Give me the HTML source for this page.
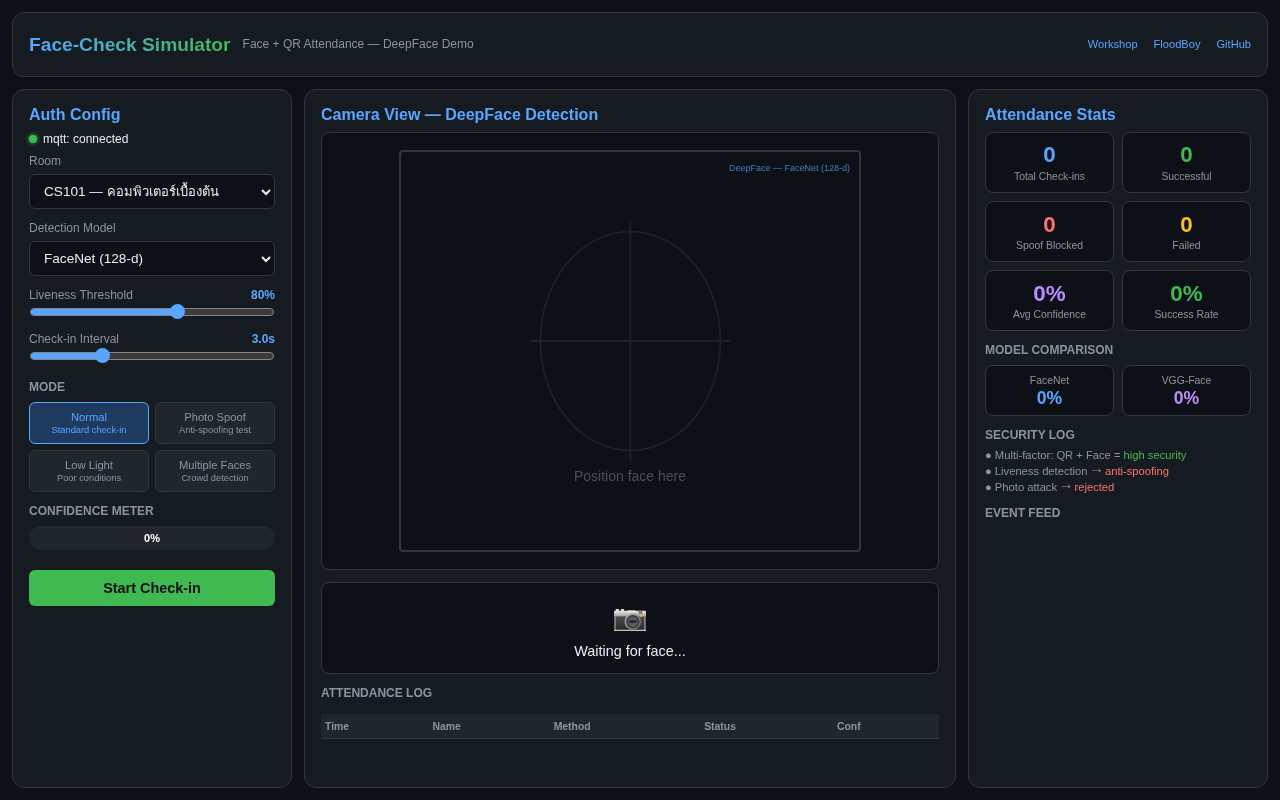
<!DOCTYPE html>
<html lang="en">
<head>
<meta charset="utf-8">
<title>Face-Check Simulator</title>
<style>
*{box-sizing:border-box;margin:0;padding:0}
html,body{width:1280px;height:800px;overflow:hidden}
body{background:#0d1117;color:#c9d1d9;font-family:"Liberation Sans","Noto Sans CJK SC",sans-serif;font-size:12px;padding:12px;position:relative}
.card{background:#161b22;border:1px solid #30363d;border-radius:12px}
header{height:65px;display:flex;align-items:center;padding:0 16px;margin-bottom:12px}
header h1{font-size:19.2px;font-weight:bold;background:linear-gradient(90deg,#58a6ff,#3fb950);-webkit-background-clip:text;background-clip:text;color:transparent}
header .sub{position:relative;top:-1px;margin-left:12px;color:#8b949e;font-size:12px}
header nav{margin-left:auto;display:flex;gap:16px;position:relative;top:-1px}
header nav a{color:#58a6ff;text-decoration:none;font-size:11.1px}
.grid{display:grid;grid-template-columns:280px 652px 300px;gap:12px;height:699px}
.panel{position:relative}
.in{position:absolute;left:0;top:-1px;right:0;height:100%;padding:16px}
h2{font-size:16px;color:#58a6ff;font-weight:bold;line-height:18px;margin:1px 0 0}
h3{font-size:12px;color:#8b949e;font-weight:bold;text-transform:uppercase;line-height:14px}
.abs{position:absolute}
/* left */
.conn{position:absolute;left:16px;top:43px;height:14px;display:flex;align-items:center;color:#e6edf3;font-size:12px}
.dot{width:8px;height:8px;border-radius:50%;background:#3fb950;box-shadow:0 0 4px #3fb950;margin-right:6px}
.lbl{position:absolute;left:16px;color:#8b949e;font-size:12px;line-height:14px}
.val{position:absolute;right:16px;color:#58a6ff;font-weight:bold;font-size:12px;line-height:14px}
.sel{position:absolute;left:16px;width:246px;height:35px;background:#0d1117;border:1px solid #30363d;border-radius:6px;color:#e6edf3;font-size:13.6px;line-height:33.5px;padding-left:14px;white-space:nowrap;overflow:hidden}
.sel svg{position:absolute;right:3px;top:13.5px}
.sel span{font-size:13px}
.track{position:absolute;left:17px;width:244px;height:8px;border-radius:4px;background:#3b3b3b;border:1px solid #858585}
.fill{position:absolute;left:18px;height:6px;margin-top:1px;border-radius:3px 0 0 3px;background:#58a6ff}
.thumb{position:absolute;width:15px;height:15px;margin:.2px 0 0 .1px;border-radius:50%;background:#58a6ff}
.mode{position:absolute;width:120px;height:42px;background:#21262d;border:1px solid #30363d;border-radius:6px;text-align:center;color:#8b949e}
.mode b{display:block;font-weight:normal;font-size:11.2px;line-height:13px;margin-top:8px}
.mode i{display:block;font-style:normal;font-size:9.3px;line-height:11px;margin-top:1px}
.mode.on{background:#1f3a5f;border-color:#58a6ff;color:#58a6ff}
.meter{position:absolute;left:16px;top:437px;width:246px;height:24px;border-radius:12px;background:#21262d;text-align:center;font-weight:bold;font-size:11px;line-height:24px;color:#fff}
.btn{position:absolute;left:16px;top:481px;width:246px;height:36px;border-radius:6px;background:#3fb950;color:#0d1117;font-weight:bold;font-size:14.4px;line-height:36px;text-align:center}

/* center */
.cam{position:absolute;left:16px;top:43px;width:618px;height:438px;background:#0d1117;border:1px solid #30363d;border-radius:8px}
.frame{position:absolute;left:77px;top:17px;width:462px;height:402px;border:2px solid #30363d;border-radius:4px;background:#0d1117}
.frame svg{position:absolute;left:0;top:0}
.flabel{position:absolute;right:9px;top:10px;font-size:9px;line-height:12px;color:rgba(88,166,255,.7);white-space:nowrap}
.fpos{position:absolute;left:0;right:0;top:316px;text-align:center;font-size:14px;line-height:16px;color:#484f58}
.status{position:absolute;left:16px;top:493px;width:618px;height:92px;background:#0d1117;border:1px solid #30363d;border-radius:8px;text-align:center}
.status svg{position:absolute;left:292px;top:25.6px}
.status p{position:absolute;left:0;right:0;top:59px;font-size:14.4px;line-height:18px;color:#e6edf3}
.thead{position:absolute;left:16px;top:625px;width:618px;height:25px;background:#21262d;border-bottom:1px solid #30363d}
.thead span{position:absolute;top:0;line-height:26px;font-size:10.4px;font-weight:bold;color:#8b949e}
/* right */
.stat{position:absolute;width:129px;height:60.5px;background:#0d1117;border:1px solid #30363d;border-radius:8px;text-align:center}
.stat b{display:block;font-size:22.4px;line-height:26px;margin-top:9.7px}
.stat i{display:block;font-style:normal;font-size:10.4px;line-height:12px;margin-top:2.5px;color:#8b949e}
.stat.r1 b{margin-top:9px}
.model{position:absolute;top:276px;width:129px;height:51px;background:#0d1117;border:1px solid #30363d;border-radius:8px;text-align:center}
.model i{display:block;font-style:normal;font-size:10.4px;line-height:12px;margin-top:9.3px;color:#8b949e}
.model b{display:block;font-size:17.6px;line-height:20px;margin-top:.5px}
.sec{position:absolute;left:16px;top:358px;font-size:11.2px;line-height:16px;color:#8b949e;white-space:nowrap}
.ar{display:inline-block;font-size:15px;line-height:0;margin:0 -1.9px;position:relative;top:-2px;left:.2px;font-weight:bold}
.blue{color:#58a6ff}.green{color:#3fb950}.red{color:#ff7070}.yellow{color:#fbbf24}.purple{color:#bc8cff}
header,.grid{will-change:transform}
</style>
</head>
<body>
<header class="card">
  <h1>Face-Check Simulator</h1>
  <span class="sub">Face + QR Attendance — DeepFace Demo</span>
  <nav><a>Workshop</a><a>FloodBoy</a><a>GitHub</a></nav>
</header>
<div class="grid">
  <section class="card panel" id="left"><div class="in">
    <h2>Auth Config</h2>
    <div class="conn"><span class="dot"></span>mqtt: connected</div>
    <div class="lbl" style="top:65px">Room</div>
    <div class="sel" style="top:85px">CS101 — <span>คอมพิวเตอร์เบื้องต้น</span><svg width="10" height="7" viewBox="0 0 10 7"><path d="M1 1l4 4 4-4" fill="none" stroke="#e6edf3" stroke-width="2"/></svg></div>
    <div class="lbl" style="top:132px">Detection Model</div>
    <div class="sel" style="top:152px">FaceNet (128-d)<svg width="10" height="7" viewBox="0 0 10 7"><path d="M1 1l4 4 4-4" fill="none" stroke="#e6edf3" stroke-width="2"/></svg></div>
    <div class="lbl" style="top:199px">Liveness Threshold</div><div class="val" style="top:199px">80%</div>
    <div class="track" style="top:219px"></div><div class="fill" style="top:219px;width:150px"></div><div class="thumb" style="left:157px;top:215px"></div>
    <div class="lbl" style="top:243px">Check-in Interval</div><div class="val" style="top:243px">3.0s</div>
    <div class="track" style="top:263px"></div><div class="fill" style="top:263px;width:75px"></div><div class="thumb" style="left:82px;top:259px"></div>
    <h3 class="abs" style="left:16px;top:291px">Mode</h3>
    <div class="mode on" style="left:16px;top:313px"><b>Normal</b><i>Standard check-in</i></div>
    <div class="mode" style="left:142px;top:313px"><b>Photo Spoof</b><i>Anti-spoofing test</i></div>
    <div class="mode" style="left:16px;top:361px"><b>Low Light</b><i>Poor conditions</i></div>
    <div class="mode" style="left:142px;top:361px"><b>Multiple Faces</b><i>Crowd detection</i></div>
    <h3 class="abs" style="left:16px;top:415px">Confidence Meter</h3>
    <div class="meter">0%</div>
    <div class="btn">Start Check-in</div>
  </div></section>
  <section class="card panel" id="center"><div class="in">
    <h2>Camera View — DeepFace Detection</h2>
    <div class="cam"><div class="frame">
      <svg width="458" height="398" viewBox="0 0 458 398"><g fill="none" stroke="#1b2029" stroke-width="2"><ellipse cx="229.4" cy="189" rx="90" ry="109.5" stroke-width="1.6" stroke="#1d222b"/><path d="M129 189H329M229.4 68.8V309"/></g></svg>
      <div class="flabel">DeepFace — FaceNet (128-d)</div>
      <div class="fpos">Position face here</div>
    </div></div>
    <div class="status">
      <svg width="32" height="22.5" viewBox="0 0 32 22.5"><defs><linearGradient id="gt" x1="0" y1="0" x2="0" y2="1"><stop offset="0" stop-color="#ececec"/><stop offset="1" stop-color="#9c9c9c"/></linearGradient><linearGradient id="gb" x1="0" y1="0" x2="0" y2="1"><stop offset="0" stop-color="#4c4c4c"/><stop offset="1" stop-color="#2a2a2a"/></linearGradient><linearGradient id="gl" x1="0" y1="0" x2="1" y2="1"><stop offset="0" stop-color="#b8b8b8"/><stop offset="1" stop-color="#5a5a5a"/></linearGradient></defs><rect x="1.7" y="0" width="3.2" height="3" fill="#dcdcdc"/><rect x="6.9" y="0" width="3.2" height="3" fill="#dcdcdc"/><rect x="0" y="1.7" width="32" height="6" rx=".8" fill="url(#gt)"/><rect x="13.5" y="1.4" width="8" height="2.1" fill="#ebe4cf"/><rect x="24.4" y="1.8" width="4" height="3.4" fill="#8c847c"/><rect x="0.4" y="7.4" width="31.2" height="13.8" fill="#a8a8a8"/><rect x="1.6" y="7.4" width="28.8" height="13.6" fill="url(#gb)"/><rect x="0" y="20.8" width="32" height="1.7" rx=".4" fill="#c4c4c4"/><circle cx="18.8" cy="12.7" r="8.3" fill="url(#gl)"/><circle cx="18.8" cy="12.7" r="6.6" fill="#33373b"/><circle cx="18.8" cy="12.7" r="5.2" fill="#565b60"/><ellipse cx="18.8" cy="12.6" rx="4.2" ry="1.3" fill="#23262a"/><circle cx="27.4" cy="7.1" r="1.1" fill="#f2c21a"/></svg>
      <p>Waiting for face...</p>
    </div>
    <h3 class="abs" style="left:16px;top:597px">Attendance Log</h3>
    <div class="thead"><span style="left:4px">Time</span><span style="left:111.5px">Name</span><span style="left:232.7px">Method</span><span style="left:383.2px">Status</span><span style="left:516px">Conf</span></div>
  </div></section>
  <section class="card panel" id="right"><div class="in">
    <h2>Attendance Stats</h2>
    <div class="stat r1" style="left:16px;top:43.4px"><b class="blue">0</b><i>Total Check-ins</i></div>
    <div class="stat r1" style="left:153px;top:43.4px"><b class="green">0</b><i>Successful</i></div>
    <div class="stat" style="left:16px;top:112px"><b class="red">0</b><i>Spoof Blocked</i></div>
    <div class="stat" style="left:153px;top:112px"><b class="yellow">0</b><i>Failed</i></div>
    <div class="stat" style="left:16px;top:181px"><b class="purple">0%</b><i>Avg Confidence</i></div>
    <div class="stat" style="left:153px;top:181px"><b class="green">0%</b><i>Success Rate</i></div>
    <h3 class="abs" style="left:16px;top:254px">Model Comparison</h3>
    <div class="model" style="left:16px"><i>FaceNet</i><b class="blue">0%</b></div>
    <div class="model" style="left:153px"><i>VGG-Face</i><b class="purple">0%</b></div>
    <h3 class="abs" style="left:16px;top:339px">Security Log</h3>
    <div class="sec">● Multi-factor: QR + Face = <span class="green">high security</span><br>● Liveness detection <span class="ar">→</span> <span class="red">anti-spoofing</span><br>● Photo attack <span class="ar">→</span> <span class="red">rejected</span></div>
    <h3 class="abs" style="left:16px;top:417px">Event Feed</h3>
  </div></section>
</div>
</body>
</html>
